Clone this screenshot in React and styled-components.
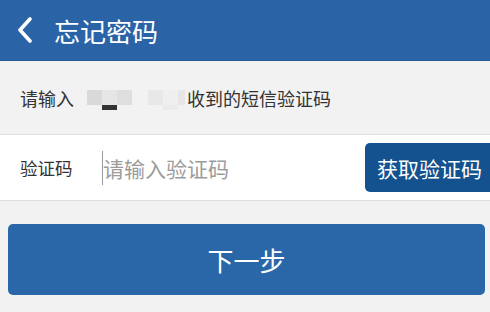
import React from "react";
import styled, { createGlobalStyle } from "styled-components";

const Global = createGlobalStyle`
  html, body {
    margin: 0;
    padding: 0;
    background: #f2f2f2;
    overflow: hidden;
  }
  body {
    font-family: "Noto Sans CJK SC", "Noto Sans", sans-serif;
  }
`;

const Page = styled.div`
  width: 490px;
  height: 312px;
  display: flex;
  flex-direction: column;
  background: #f2f2f2;
  overflow: hidden;
`;
const Header = styled.div`
  height: 60px;
  flex-shrink: 0;
  display: flex;
  align-items: center;
  gap: 19px;
  padding-left: 17px;
  background-color: #2a64a7;
  border-bottom: 1px solid #245a97;
`;
const Back = styled.svg`
  width: 18px;
  height: 26px;
`;
const Title = styled.h1`
  margin: 0;
  font-size: 26px;
  font-weight: 400;
  color: #ffffff;
  letter-spacing: 0;
`;
const Info = styled.div`
  height: 73px;
  display: flex;
  align-items: center;
  padding-left: 20px;
  font-size: 18px;
  color: #333333;
`;
const Masked = styled.span`
  display: inline-flex;
  position: relative;
  height: 15px;
  margin: 0 2px 0 ${(p) => p.gap}px;
`;
const Block = styled.span`
  display: inline-block;
  width: ${(p) => p.w || 15}px;
  height: 15px;
  background: ${(p) => p.bg};
`;
const Under = styled.span`
  position: absolute;
  top: 15px;
  left: ${(p) => p.left}px;
  width: 15px;
  height: 5px;
  background: ${(p) => p.bg};
`;
const Row = styled.div`
  height: 65px;
  display: flex;
  align-items: center;
  background: #ffffff;
  border-top: 1px solid #dedede;
  border-bottom: 1px solid #dedede;
  padding-left: 20px;
`;
const Label = styled.span`
  width: 82px;
  flex-shrink: 0;
  font-size: 17.5px;
  color: #333333;
`;
const Input = styled.input`
  flex: 1;
  min-width: 0;
  border: none;
  outline: none;
  padding: 0;
  height: 34px;
  border-left: 1px solid #9a9a9a;
  font-family: inherit;
  font-size: 21px;
  color: #333333;
  background: transparent;
  &::placeholder {
    color: #9c9c9c;
  }
`;
const CodeButton = styled.button`
  flex-shrink: 0;
  width: 135px;
  height: 49px;
  margin-right: -10px;
  padding: 0 0 0 12px;
  text-align: left;
  border: none;
  border-radius: 5px;
  background-color: #14528f;
  color: #ffffff;
  font-family: inherit;
  font-size: 21px;
`;
const NextButton = styled.button`
  margin: 23px 5px 0 8px;
  height: 71px;
  border: none;
  border-radius: 5px;
  background-color: #2a67a9;
  color: #ffffff;
  font-family: inherit;
  font-size: 26px;
`;

const App = () => {
  return (
    <Page>
      <Global />
      <Header>
        <Back viewBox="0 0 18 26">
          <polyline
            points="13,2 3,13 13,24"
            fill="none"
            stroke="#ffffff"
            strokeWidth="3.6"
            strokeLinecap="round"
            strokeLinejoin="round"
          />
        </Back>
        <Title>忘记密码</Title>
      </Header>
      <Info>
        请输入
        <Masked gap={13}>
          <Block bg="#d9d9d9" />
          <Block bg="#e6e6e6" />
          <Block bg="#dedede" />
          <Under left={15} bg="#333333" />
        </Masked>
        <Masked gap={14}>
          <Block bg="#e8e8e8" />
          <Block bg="#efefef" />
          <Block w={7} bg="#e6e6e6" />
          <Under left={15} bg="#ebebeb" />
        </Masked>
        收到的短信验证码
      </Info>
      <Row>
        <Label>验证码</Label>
        <Input placeholder="请输入验证码" />
        <CodeButton>获取验证码</CodeButton>
      </Row>
      <NextButton>下一步</NextButton>
    </Page>
  );
};

export default App;
